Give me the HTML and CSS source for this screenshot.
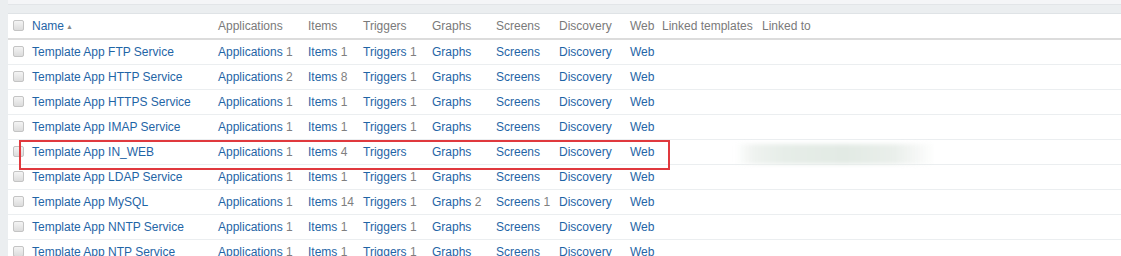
FILE: index.html
```html
<!DOCTYPE html>
<html>
<head>
<meta charset="utf-8">
<link rel="stylesheet" href="styles.css">
</head>
<body>
<div class="page">
  <div class="side"></div>
  <div class="main">
    <div class="topband"></div>
    <div class="tablewrap">
      <table class="list">
        <colgroup>
          <col class="c-cb"><col class="c-name"><col class="c-app"><col class="c-items"><col class="c-trig"><col class="c-graph"><col class="c-scr"><col class="c-disc"><col class="c-web"><col class="c-lt"><col class="c-lto">
        </colgroup>
        <thead>
          <tr>
            <th><span class="cb"></span></th>
            <th><a class="sort">Name</a><span class="arrow">▲</span></th>
            <th>Applications</th>
            <th>Items</th>
            <th>Triggers</th>
            <th>Graphs</th>
            <th>Screens</th>
            <th>Discovery</th>
            <th>Web</th>
            <th>Linked templates</th>
            <th>Linked to</th>
          </tr>
        </thead>
        <tbody>
          <tr><td><span class="cb"></span></td><td><a>Template App FTP Service</a></td><td><a>Applications</a> <sup>1</sup></td><td><a>Items</a> <sup>1</sup></td><td><a>Triggers</a> <sup>1</sup></td><td><a>Graphs</a></td><td><a>Screens</a></td><td><a>Discovery</a></td><td><a>Web</a></td><td></td><td></td></tr>
          <tr><td><span class="cb"></span></td><td><a>Template App HTTP Service</a></td><td><a>Applications</a> <sup>2</sup></td><td><a>Items</a> <sup>8</sup></td><td><a>Triggers</a> <sup>1</sup></td><td><a>Graphs</a></td><td><a>Screens</a></td><td><a>Discovery</a></td><td><a>Web</a></td><td></td><td></td></tr>
          <tr><td><span class="cb"></span></td><td><a>Template App HTTPS Service</a></td><td><a>Applications</a> <sup>1</sup></td><td><a>Items</a> <sup>1</sup></td><td><a>Triggers</a> <sup>1</sup></td><td><a>Graphs</a></td><td><a>Screens</a></td><td><a>Discovery</a></td><td><a>Web</a></td><td></td><td></td></tr>
          <tr><td><span class="cb"></span></td><td><a>Template App IMAP Service</a></td><td><a>Applications</a> <sup>1</sup></td><td><a>Items</a> <sup>1</sup></td><td><a>Triggers</a> <sup>1</sup></td><td><a>Graphs</a></td><td><a>Screens</a></td><td><a>Discovery</a></td><td><a>Web</a></td><td></td><td></td></tr>
          <tr class="marked"><td><span class="cb"></span></td><td><a>Template App IN_WEB</a></td><td><a>Applications</a> <sup>1</sup></td><td><a>Items</a> <sup>4</sup></td><td><a>Triggers</a></td><td><a>Graphs</a></td><td><a>Screens</a></td><td><a>Discovery</a></td><td><a>Web</a></td><td></td><td class="blurcell"><span class="smudge"></span></td></tr>
          <tr><td><span class="cb"></span></td><td><a>Template App LDAP Service</a></td><td><a>Applications</a> <sup>1</sup></td><td><a>Items</a> <sup>1</sup></td><td><a>Triggers</a> <sup>1</sup></td><td><a>Graphs</a></td><td><a>Screens</a></td><td><a>Discovery</a></td><td><a>Web</a></td><td></td><td></td></tr>
          <tr><td><span class="cb"></span></td><td><a>Template App MySQL</a></td><td><a>Applications</a> <sup>1</sup></td><td><a>Items</a> <sup>14</sup></td><td><a>Triggers</a> <sup>1</sup></td><td><a>Graphs</a> <sup>2</sup></td><td><a>Screens</a> <sup>1</sup></td><td><a>Discovery</a></td><td><a>Web</a></td><td></td><td></td></tr>
          <tr><td><span class="cb"></span></td><td><a>Template App NNTP Service</a></td><td><a>Applications</a> <sup>1</sup></td><td><a>Items</a> <sup>1</sup></td><td><a>Triggers</a> <sup>1</sup></td><td><a>Graphs</a></td><td><a>Screens</a></td><td><a>Discovery</a></td><td><a>Web</a></td><td></td><td></td></tr>
          <tr><td><span class="cb"></span></td><td><a>Template App NTP Service</a></td><td><a>Applications</a> <sup>1</sup></td><td><a>Items</a> <sup>1</sup></td><td><a>Triggers</a> <sup>1</sup></td><td><a>Graphs</a></td><td><a>Screens</a></td><td><a>Discovery</a></td><td><a>Web</a></td><td></td><td></td></tr>
        </tbody>
      </table>
      <div class="redbox"></div>
    </div>
  </div>
</div>
</body>
</html>
```
FILE: styles.css
```css
html, body {
  margin: 0;
  padding: 0;
  background: #ffffff;
}
body {
  font-family: "Liberation Sans", Arial, sans-serif;
  font-size: 12px;
  color: #1f2c33;
  overflow: hidden;
}
.page {
  display: flex;
  width: 1121px;
  height: 256px;
  overflow: hidden;
}
.side {
  width: 8px;
  flex: 0 0 8px;
  background: #ebeef0;
}
.main {
  flex: 1;
  display: flex;
  flex-direction: column;
  background: #f4f5f7;
}
.topband {
  flex: 0 0 auto;
  height: 10px;
  margin-top: 4px;
  background: #ebeef0;
  border-top: 1px solid #e2e5e8;
  border-bottom: 1px solid #dfe3e6;
  box-sizing: border-box;
}
.tablewrap {
  position: relative;
  flex: 0 0 auto;
  background: #ffffff;
}
.list {
  border-collapse: collapse;
  table-layout: fixed;
  width: 1113px;
}
.c-cb { width: 19px; }
.c-name { width: 186px; }
.c-app { width: 90px; }
.c-items { width: 55px; }
.c-trig { width: 69px; }
.c-graph { width: 64px; }
.c-scr { width: 63px; }
.c-disc { width: 71px; }
.c-web { width: 32px; }
.c-lt { width: 100px; }
.c-lto { width: auto; }

.list th {
  height: 24px;
  padding: 0 0 0 5px;
  text-align: left;
  font-weight: normal;
  color: #7a7a7a;
  white-space: nowrap;
  border-bottom: 2px solid #dcdcdc;
  vertical-align: middle;
}
.list td {
  height: 24px;
  padding: 0 0 0 5px;
  border-bottom: 1px solid #ebeef0;
  white-space: nowrap;
  vertical-align: middle;
}
.list a {
  color: #1f65a6;
  text-decoration: none;
}
.arrow {
  font-size: 7px;
  color: #8a8a8a;
  margin-left: 2px;
  position: relative;
  top: -1px;
}
.list sup {
  vertical-align: baseline;
  font-size: 12px;
  color: #7f7f7f;
}
.cb {
  display: inline-block;
  width: 9px;
  height: 9px;
  border: 1px solid #c4c4c4;
  border-radius: 2px;
  background: linear-gradient(#f4f4f4, #dcdcdc);
  vertical-align: middle;
  position: relative;
  top: -1px;
}
.blurcell {
  position: relative;
}
.smudge {
  position: absolute;
  left: -22px;
  top: 4px;
  width: 200px;
  height: 20px;
  background: linear-gradient(90deg, rgba(236,240,237,0) 0%, #eef2ef 10%, #e6ede8 25%, #e2eae4 55%, #eaefeb 80%, rgba(240,243,241,0) 100%);
  filter: blur(2px);
}
.redbox {
  position: absolute;
  left: 11px;
  top: 126px;
  width: 647px;
  height: 26px;
  border: 2px solid #e0393e;
  pointer-events: none;
}
```
